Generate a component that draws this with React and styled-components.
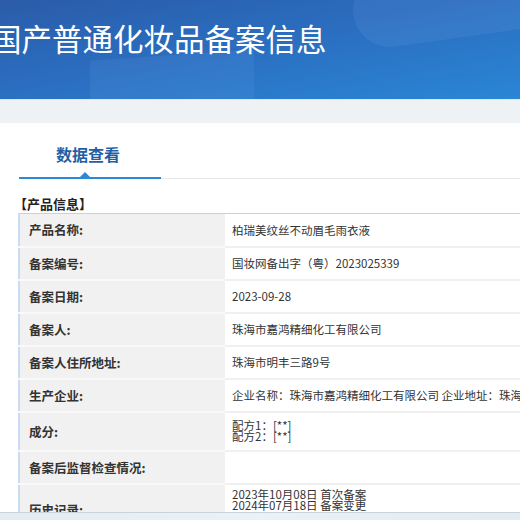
import React from 'react'
import styled, { createGlobalStyle } from 'styled-components'

const GlobalStyle = createGlobalStyle`
	html, body {
		margin: 0;
		padding: 0;
		background: #fff;
		overflow: hidden;
		font-family: 'Noto Sans CJK SC', 'Noto Sans', sans-serif;
		color: #333;
	}
`
const Page = styled.div`
	width: 520px;
	height: 520px;
	overflow: hidden;
	position: relative;
`
const Header = styled.div`
	height: 99px;
	position: relative;
	overflow: hidden;
	background: linear-gradient(170deg, #2a5ca9 0%, #2b6dbf 45%, #2a86d6 100%);
	&::before {
		content: '';
		position: absolute;
		left: 90px;
		top: 55px;
		width: 164px;
		height: 60px;
		background: rgba(120, 170, 235, 0.12);
		transform: skewY(-4deg);
	}
	&::after {
		content: '';
		position: absolute;
		left: 352px;
		top: -40px;
		width: 260px;
		height: 74px;
		border-radius: 40px;
		background: rgba(140, 180, 235, 0.12);
		transform: rotate(-8deg);
	}
`
const Title = styled.h1`
	position: relative;
	z-index: 1;
	margin: 0 0 0 -9px;
	padding-top: 17px;
	font-size: 30.5px;
	line-height: 42px;
	font-weight: 400;
	color: #fff;
	white-space: nowrap;
`
const Band = styled.div`
	height: 23px;
	background: #eef2f5;
	border-top: 1px solid #dfe8f2;
`
const Tabs = styled.div`
	display: flex;
	margin: 0 0 0 19px;
	padding-top: 20px;
	border-bottom: 1px solid #e6e6e6;
`
const Tab = styled.div`
	position: relative;
	width: 142px;
	padding: 0 0 12px 37px;
	box-sizing: border-box;
	font-size: 16px;
	font-weight: 700;
	color: #1f5fa6;
	line-height: 22px;
	border-bottom: 2px solid #2a8ad8;
	margin-bottom: -1px;
	&::after {
		content: '';
		position: absolute;
		left: 61px;
		bottom: 0;
		border: 5px solid transparent;
		border-bottom-color: #2a8ad8;
		border-top-width: 0;
	}
`
const Section = styled.div`
	padding: 17px 0 0 18px;
`
const SectionTitle = styled.div`
	font-size: 13px;
	font-weight: 700;
	line-height: 15px;
	color: #222;
	margin-left: -4px;
`
const Table = styled.table`
	width: 1100px;
	border-collapse: collapse;
	border-top: 1px solid #bcd4ee;
	border-left: 2px solid #c9dcf1;
	margin-top: 2px;
`
const Label = styled.td`
	width: 206px;
	box-sizing: border-box;
	height: ${p => p.$h || 33}px;
	padding: 0 0 0 9px;
	background: #f1f1f1;
	border-bottom: 2px solid #f9f9f9;
	font-size: 12.5px;
	font-weight: 700;
	color: #333;
	white-space: nowrap;
`
const Value = styled.td`
	padding: ${p => (p.$top ? '4px 0 0 7px' : '0 0 0 7px')};
	vertical-align: ${p => (p.$top ? 'top' : 'middle')};
	border-bottom: 2px solid #f0f0f0;
	font-size: 11.5px;
	color: #333;
	white-space: nowrap;
	line-height: ${p => p.$lh || 18}px;
`
const ScrollBar = styled.div`
	position: absolute;
	left: 0;
	right: 0;
	bottom: 0;
	height: 7px;
	border-top: 1px solid #c9d3dc;
	background: linear-gradient(90deg, #e4ecf3, #eaf2f8 50%, #e2eaf2);
`

const rows = [
	['产品名称:', '柏瑞美纹丝不动眉毛雨衣液'],
	['备案编号:', '国妆网备出字（粤）2023025339'],
	['备案日期:', '2023-09-28'],
	['备案人:', '珠海市嘉鸿精细化工有限公司'],
	['备案人住所地址:', '珠海市明丰三路9号'],
	['生产企业:', '企业名称：珠海市嘉鸿精细化工有限公司 企业地址：珠海市'],
]

const App = () => {
	return (
		<Page>
			<GlobalStyle />
			<Header>
				<Title>国产普通化妆品备案信息</Title>
			</Header>
			<Band />
			<Tabs>
				<Tab>数据查看</Tab>
			</Tabs>
			<Section>
				<SectionTitle>【产品信息】</SectionTitle>
				<Table>
					<tbody>
						{rows.map(([k, v]) => (
							<tr key={k}>
								<Label>{k}</Label>
								<Value>{v}</Value>
							</tr>
						))}
						<tr>
							<Label $h={39}>成分:</Label>
							<Value $lh={11}>
								配方1：[**]
								<br />
								配方2：[**]
							</Value>
						</tr>
						<tr>
							<Label>备案后监督检查情况:</Label>
							<Value />
						</tr>
						<tr>
							<Label $h={52}>历史记录:</Label>
							<Value $lh={11} $top>
								2023年10月08日 首次备案
								<br />
								2024年07月18日 备案变更
							</Value>
						</tr>
					</tbody>
				</Table>
			</Section>
			<ScrollBar />
		</Page>
	)
}

export default App
